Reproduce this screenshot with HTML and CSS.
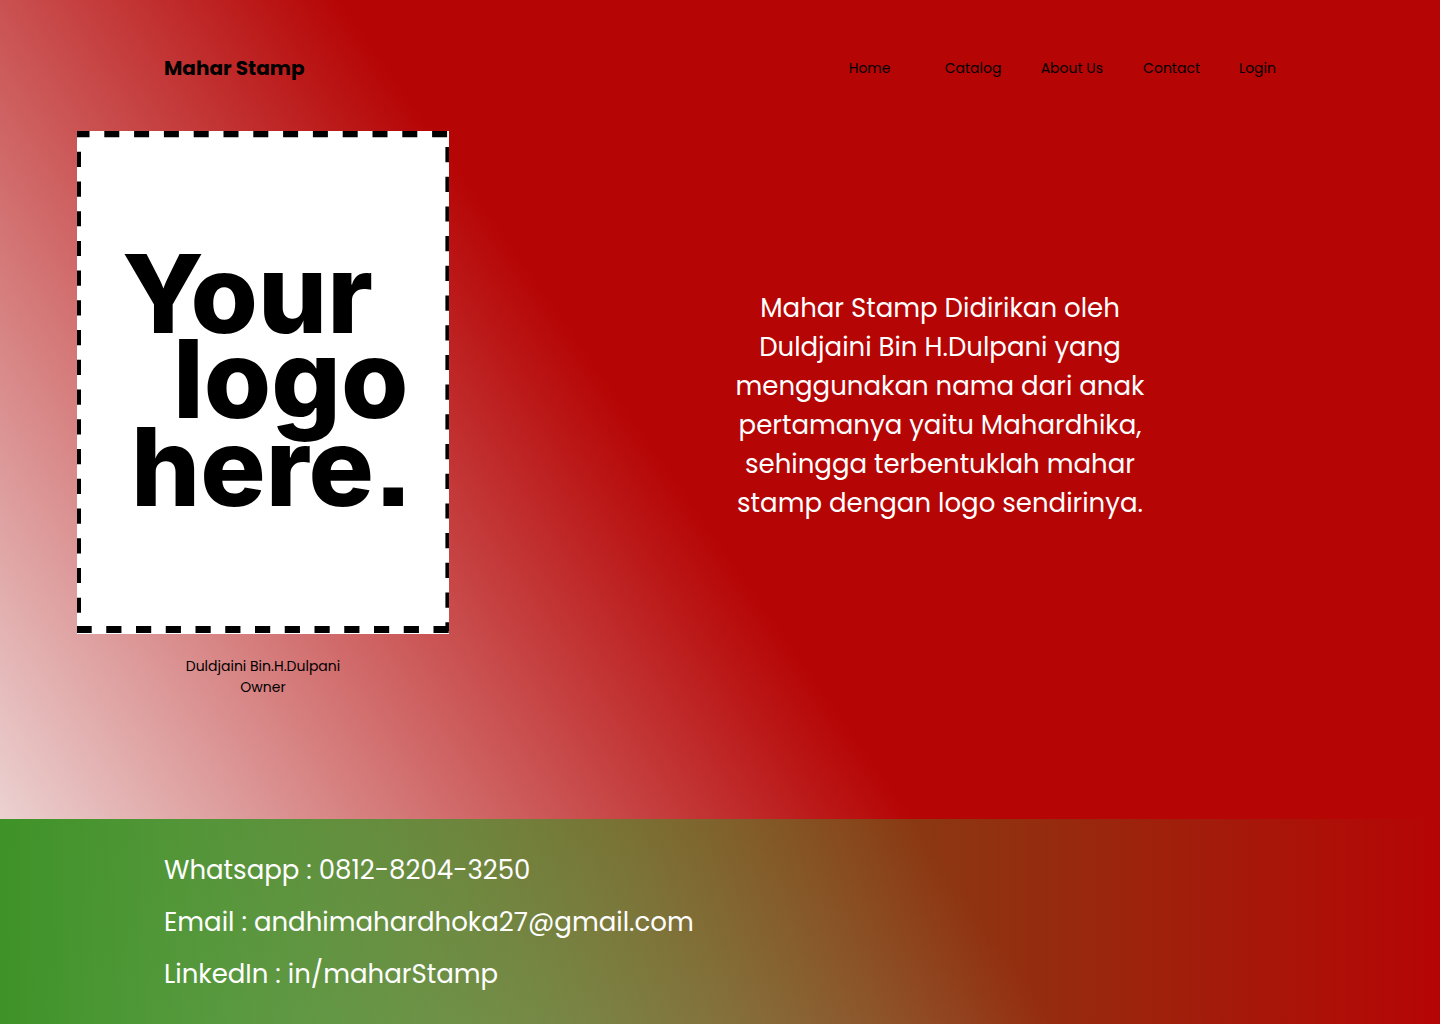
FILE: index.html
```html
<!DOCTYPE html>
<html lang="id">
<head>
<meta charset="utf-8">
<meta name="viewport" content="width=device-width, initial-scale=1">
<title>Mahar Stamp</title>
<link rel="stylesheet" href="styles.css">
</head>
<body>
<div class="page">
  <header class="header">
    <a class="brand" href="#">Mahar Stamp</a>
    <nav class="nav">
      <a class="nav-link nav-short" href="#">Home</a>
      <a class="nav-link nav-short" href="#">Catalog</a>
      <a class="nav-link" href="#">About Us</a>
      <a class="nav-link nav-short" href="#">Contact</a>
      <a class="nav-link" href="#">Login</a>
    </nav>
  </header>
  <main class="main">
    <figure class="owner">
      <svg class="logo" viewBox="0 0 372 503" role="img" aria-label="Your logo here.">
        <rect width="372" height="503" fill="#fff"/>
        <g fill="none" stroke="#000">
          <path d="M-2.5 3H372" stroke-width="6.4" stroke-dasharray="15 14.8"/>
          <path d="M2 20.7V490" stroke-width="4" stroke-dasharray="15.2 14.53"/>
          <path d="M370.2 16V500" stroke-width="3.6" stroke-dasharray="15.2 14.5"/>
          <path d="M-.5 498.5H372" stroke-width="7" stroke-dasharray="15.2 14.55"/>
        </g>
        <g class="logo-text">
          <text x="45" y="202">Your</text>
          <text x="96" y="287">logo</text>
          <text x="54" y="375">here.</text>
        </g>
      </svg>
      <figcaption class="caption">Duldjaini Bin.H.Dulpani<br>Owner</figcaption>
    </figure>
    <p class="about">Mahar Stamp Didirikan oleh<br>Duldjaini Bin H.Dulpani yang<br>menggunakan nama dari anak<br>pertamanya yaitu Mahardhika,<br>sehingga terbentuklah mahar<br>stamp dengan logo sendirinya.</p>
  </main>
  <footer class="footer">
    <p>Whatsapp : 0812-8204-3250</p>
    <p>Email : andhimahardhoka27@gmail.com</p>
    <p>LinkedIn : in/maharStamp</p>
  </footer>
</div>
</body>
</html>
```
FILE: styles.css
```css
* { box-sizing: border-box; }
body {
  margin: 0;
  font-family: Poppins, Inter, sans-serif;
  font-size: 14px;
  line-height: 21px;
  color: #000;
}
p, figure { margin: 0; }
a { color: inherit; text-decoration: none; }
.page {
  min-height: 100vh;
  display: flex;
  flex-direction: column;
  background: linear-gradient(55deg, #f4f1f1 0%, #b60505 49%);
}
.header {
  display: flex;
  align-items: center;
  justify-content: space-between;
  padding: 52px 164px 47px;
}
.brand { font-size: 20px; font-weight: 700; line-height: 32px; }
.nav { display: flex; gap: 40px; }
.nav-link { white-space: nowrap; }
.nav-short { width: 56px; }
.main {
  flex: 1;
  display: grid;
  grid-template-columns: 372px 1fr;
  align-items: start;
  padding: 0 77px 40px;
}
.logo { display: block; width: 100%; height: auto; }
.logo-text {
  font-family: Inter, "Liberation Sans", sans-serif;
  font-size: 109px;
  font-weight: 800;
  font-feature-settings: "ss07";
}
.caption { margin-top: 22px; text-align: center; }
.about {
  margin-top: 158px;
  padding-right: 68px;
  padding-left: 136px;
  text-align: center;
  color: #fff;
  font-size: 26px;
  line-height: 39px;
}
.footer {
  display: grid;
  gap: 13px;
  padding: 32px 164px 30px;
  background: linear-gradient(90deg, #3e9227, rgba(62, 146, 39, 0));
  color: #fff;
  font-size: 26px;
  line-height: 39px;
}
```
